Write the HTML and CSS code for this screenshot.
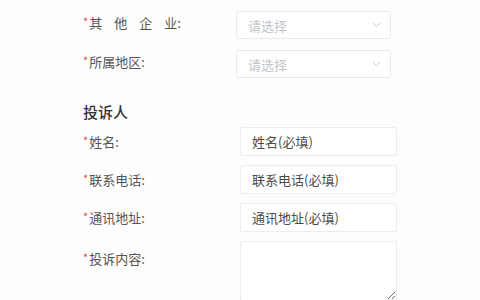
FILE: index.html
```html
<!DOCTYPE html>
<html lang="zh-CN">
<head>
<meta charset="utf-8">
<title>投诉表单</title>
<link rel="stylesheet" href="styles.css">
</head>
<body>
<div class="form">
  <div class="row row-select">
    <div class="label"><span class="req">*</span><span class="spaced">其他企</span>业:</div>
    <div class="select"><span class="ph">请选择</span>
      <svg class="chev" width="9" height="6" viewBox="0 0 9 6"><path d="M1 1 L4.5 4.5 L8 1" fill="none" stroke="#c8cbd0" stroke-width="1"/></svg>
    </div>
  </div>
  <div class="row row-select">
    <div class="label"><span class="req">*</span>所属地区:</div>
    <div class="select"><span class="ph">请选择</span>
      <svg class="chev" width="9" height="6" viewBox="0 0 9 6"><path d="M1 1 L4.5 4.5 L8 1" fill="none" stroke="#c8cbd0" stroke-width="1"/></svg>
    </div>
  </div>

  <h3 class="section">投诉人</h3>

  <div class="row">
    <div class="label label-wide"><span class="req">*</span>姓名:</div>
    <input class="input" type="text" placeholder="姓名(必填)">
  </div>
  <div class="row">
    <div class="label label-wide"><span class="req">*</span>联系电话:</div>
    <input class="input" type="text" placeholder="联系电话(必填)">
  </div>
  <div class="row">
    <div class="label label-wide"><span class="req">*</span>通讯地址:</div>
    <input class="input" type="text" placeholder="通讯地址(必填)">
  </div>
  <div class="row row-top">
    <div class="label label-wide label-top"><span class="req">*</span>投诉内容:</div>
    <textarea class="textarea"></textarea>
  </div>
</div>
</body>
</html>
```
FILE: styles.css
```css
html, body {
  margin: 0;
  padding: 0;
  background: #fdfdfd;
  font-family: "Noto Sans CJK SC", "Noto Sans", sans-serif;
  overflow: hidden;
}
.form {
  padding: 11px 0 0 83px;
}
.row {
  display: flex;
  align-items: center;
  height: 28px;
  margin-bottom: 10px;
}
.row-select {
  margin-bottom: 11px;
}
.label {
  width: 153px;
  flex: none;
  font-size: 13px;
  color: #555;
  line-height: 18px;
  margin-top: -6px;
  white-space: nowrap;
}
.label-wide {
  width: 157px;
  margin-top: 0;
}
.req {
  color: #e0474c;
  font-size: 11px;
  margin-right: 1px;
  vertical-align: 2px;
}
.spaced {
  letter-spacing: 12px;
}
.select {
  width: 155px;
  height: 28px;
  box-sizing: border-box;
  border: 1px solid #eaeaea;
  border-radius: 3px;
  background: #fff;
  display: flex;
  align-items: center;
  justify-content: space-between;
  padding: 0 9px 0 11px;
}
.ph {
  font-size: 13px;
  color: #c3c5ca;
}
.chev {
  display: block;
}
.section {
  margin: 24px 0 5px 0;
  font-size: 15px;
  font-weight: 500;
  color: #333;
  line-height: 20px;
}
.input {
  width: 157px;
  height: 29px;
  box-sizing: border-box;
  border: 1px solid #ececec;
  border-radius: 2px;
  background: #fff;
  padding: 0 0 0 11px;
  font-family: inherit;
  font-size: 13px;
  color: #444;
  outline: none;
}
.input::placeholder {
  color: #4a4a4a;
}
.row-top {
  align-items: flex-start;
  height: auto;
}
.label-top {
  margin-top: 7px;
}
.textarea {
  width: 157px;
  height: 60px;
  box-sizing: border-box;
  border: 1px solid #ececec;
  border-radius: 2px;
  background: #fff;
  font-family: inherit;
  margin: 0;
  padding: 4px;
}
```
